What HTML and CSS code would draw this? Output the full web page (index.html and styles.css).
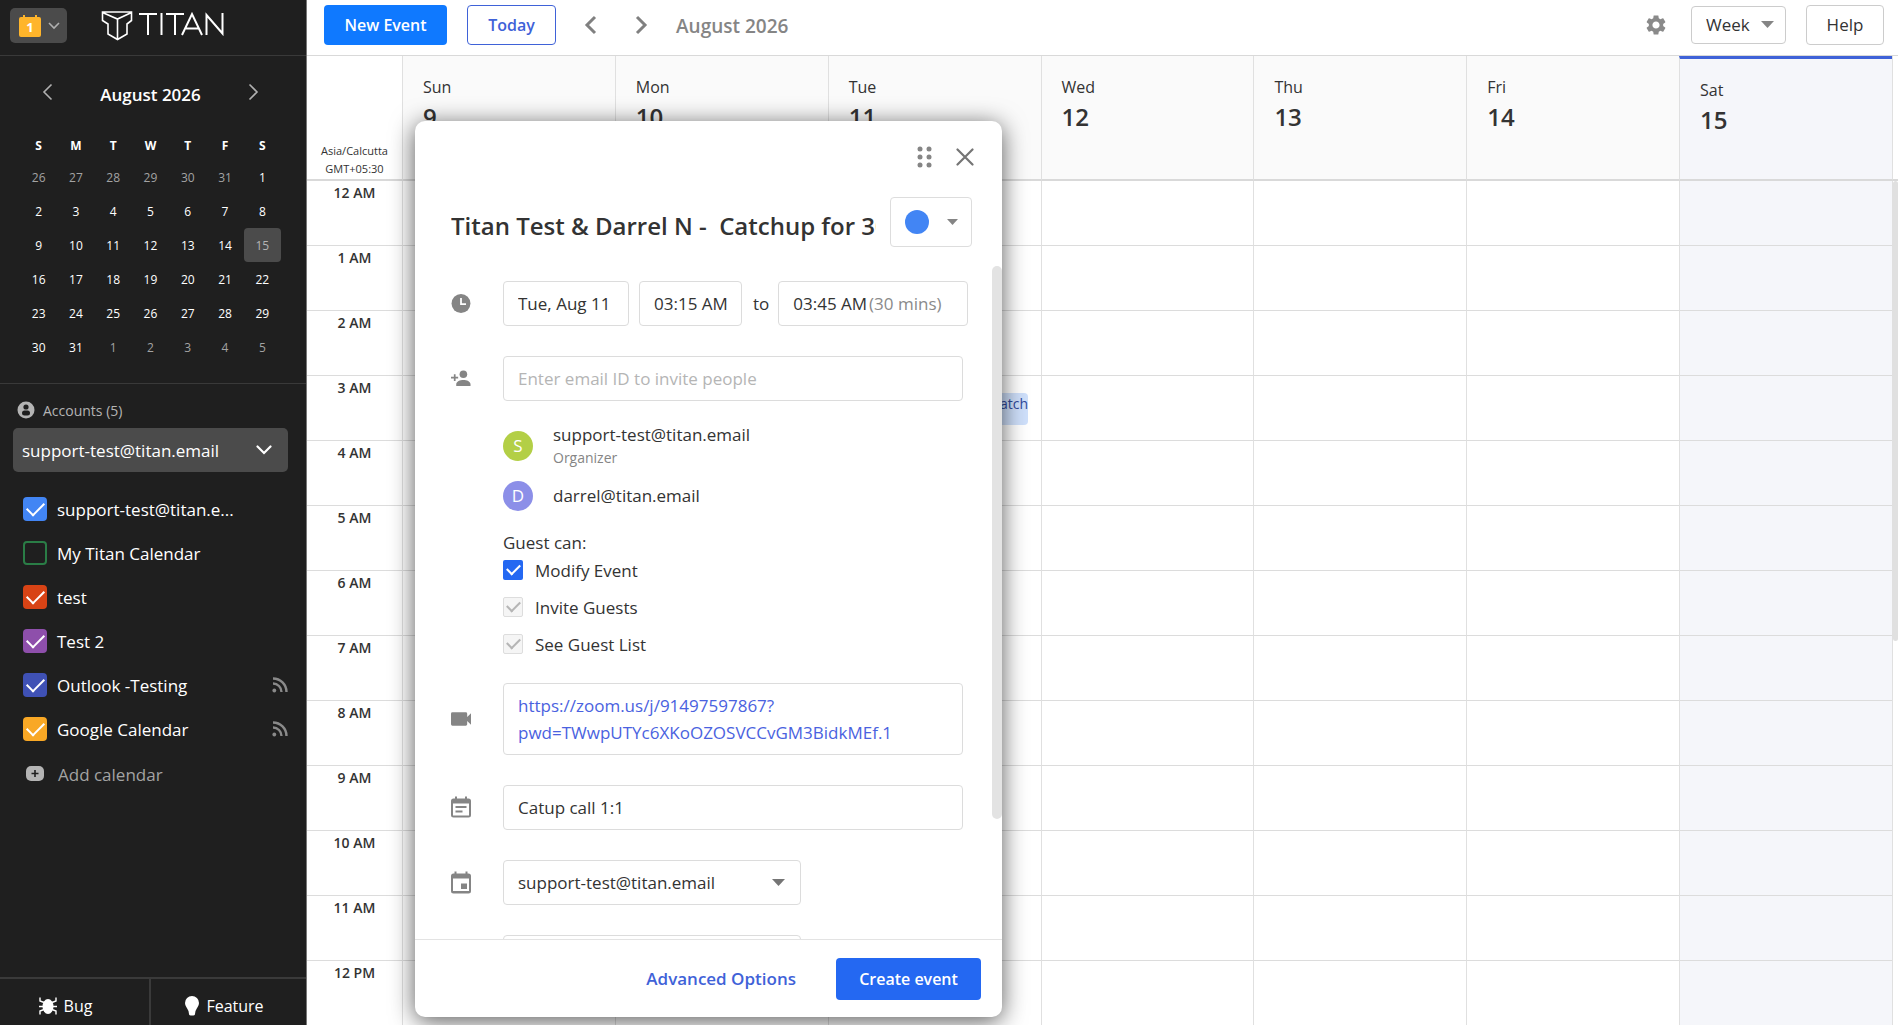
FILE: index.html
```
<!DOCTYPE html>
<html lang="en">
<head>
  <meta charset="UTF-8">
  <meta name="viewport" content="width=device-width, initial-scale=1.0">
  <title>Titan Calendar</title>
  <link rel="stylesheet" href="styles.css">
</head>
<body>
  <!-- Sidebar -->
  <aside class="sidebar">
    <div class="brand">
      <button class="app-switch" aria-label="Switch app">
        <svg width="24" height="24" viewBox="0 0 24 24"><path fill="#ffb52b" d="M5 1h2v2h10V1h2v2h2a2 2 0 0 1 2 2v16a2 2 0 0 1-2 2H3a2 2 0 0 1-2-2V5a2 2 0 0 1 2-2h2z"/><text x="12" y="18" text-anchor="middle" class="app-day">1</text></svg>
        <svg width="12" height="8" viewBox="0 0 12 8"><path class="stroke" d="M1 1l5 5 5-5"/></svg>
      </button>
      <a href="#" class="logo" aria-label="Titan">
        <svg width="124" height="32" viewBox="0 0 124 32" fill="none" stroke="#fff" stroke-width="2">
          <path stroke-width="1.6" d="M1.500 2h29v8.500L26 14v10l-9.500 5.500L7 24V14l-5.500-3.500zM1.500 2.500L16.500 9l14-6.500M16.500 9v20"/>
          <path d="M38 4h18M47 4v21M60.500 3v22M65 4h18M74 4v21M81 25L91 4l10 21M85 18.500h12.500M105.500 25V5l16 18.500V3"/>
        </svg>
      </a>
    </div>

    <div class="mini">
      <div class="mini-nav">
        <button aria-label="Previous month"><svg width="11" height="18" viewBox="0 0 11 18"><path class="stroke" d="M9.500 1.500L2 9l7.500 7.500"/></svg></button>
        <h2>August 2026</h2>
        <button aria-label="Next month"><svg width="11" height="18" viewBox="0 0 11 18"><path class="stroke" d="M1.500 1.500L9 9l-7.500 7.500"/></svg></button>
      </div>
      <table class="mini-table">
        <thead><tr><th>S</th><th>M</th><th>T</th><th>W</th><th>T</th><th>F</th><th>S</th></tr></thead>
        <tbody>
          <tr><td class="out">26</td><td class="out">27</td><td class="out">28</td><td class="out">29</td><td class="out">30</td><td class="out">31</td><td>1</td></tr>
          <tr><td>2</td><td>3</td><td>4</td><td>5</td><td>6</td><td>7</td><td>8</td></tr>
          <tr><td>9</td><td>10</td><td>11</td><td>12</td><td>13</td><td>14</td><td class="selected">15</td></tr>
          <tr><td>16</td><td>17</td><td>18</td><td>19</td><td>20</td><td>21</td><td>22</td></tr>
          <tr><td>23</td><td>24</td><td>25</td><td>26</td><td>27</td><td>28</td><td>29</td></tr>
          <tr><td>30</td><td>31</td><td class="out">1</td><td class="out">2</td><td class="out">3</td><td class="out">4</td><td class="out">5</td></tr>
        </tbody>
      </table>
    </div>

    <div class="accounts">
      <label class="accounts-label" for="account">
        <svg width="18" height="18" viewBox="0 0 18 18"><circle cx="9" cy="9" r="8.500" fill="#b4b4b4"/><circle cx="9" cy="6" r="2.600" fill="#1f1f1f"/><rect x="5" y="9.500" width="8" height="5" rx="2.500" fill="#1f1f1f"/></svg>
        Accounts (5)
      </label>
      <div class="select-wrap">
        <select id="account" class="account-select"><option>support-test@titan.email</option></select>
        <svg class="select-arrow" width="16" height="10" viewBox="0 0 16 10"><path d="M1.500 1.500L8 8l6.500-6.500" fill="none" stroke="#fff" stroke-width="2.200" stroke-linecap="round"/></svg>
      </div>
      <ul class="calendars">
        <li><label><input type="checkbox" class="c-blue" checked><span>support-test@titan.e...</span></label></li>
        <li><label><input type="checkbox" class="c-green"><span>My Titan Calendar</span></label></li>
        <li><label><input type="checkbox" class="c-red" checked><span>test</span></label></li>
        <li><label><input type="checkbox" class="c-purple" checked><span>Test 2</span></label></li>
        <li><label><input type="checkbox" class="c-indigo" checked><span>Outlook -Testing</span></label>
          <svg class="rss" width="16" height="16" viewBox="0 0 16 16"><circle cx="2.300" cy="13.500" r="1.900"/><path d="M1 6.500a8.500 8.500 0 0 1 8.500 8.500M1 1.500A13.500 13.500 0 0 1 14.500 15"/></svg></li>
        <li><label><input type="checkbox" class="c-amber" checked><span>Google Calendar</span></label>
          <svg class="rss" width="16" height="16" viewBox="0 0 16 16"><circle cx="2.300" cy="13.500" r="1.900"/><path d="M1 6.500a8.500 8.500 0 0 1 8.500 8.500M1 1.500A13.500 13.500 0 0 1 14.500 15"/></svg></li>
      </ul>
      <button class="add-calendar">
        <svg width="18" height="16" viewBox="0 0 18 16"><rect width="18" height="15" rx="5" fill="#b4b4b4"/><path d="M9 4v7M5.500 7.500h7" stroke="#1f1f1f" stroke-width="1.600"/></svg>
        Add calendar
      </button>
    </div>

    <div class="feedback">
      <button class="bug">
        <svg width="18" height="18" viewBox="0 0 18 18"><ellipse cx="9" cy="9.500" rx="5.500" ry="7.500" fill="#fff"/><path d="M1 .5v3.500l4 1.500M17 .5v3.500l-4 1.500M0 9.500h18M1 17.500V14l4-1.500M17 17.500V14l-4-1.500" fill="none" stroke="#fff" stroke-width="1.400"/></svg>
        Bug
      </button>
      <button class="feature">
        <svg width="14" height="20" viewBox="0 0 14 20"><path fill="#fff" d="M7 0a7 7 0 0 1 7 7c0 3-2 4.500-3.500 8l-.5 3c0 1-1 1.500-3 1.500S4 19 4 18l-.5-3C2 11.500 0 10 0 7a7 7 0 0 1 7-7z"/></svg>
        Feature
      </button>
    </div>
  </aside>

  <!-- Calendar -->
  <main class="main">
    <header class="toolbar">
      <button class="btn-new">New Event</button>
      <button class="btn-today">Today</button>
      <button class="btn-arrow" aria-label="Previous week"><svg width="14" height="20" viewBox="0 0 14 20"><path d="M11 2l-8 8 8 8"/></svg></button>
      <button class="btn-arrow" aria-label="Next week"><svg width="14" height="20" viewBox="0 0 14 20"><path d="M3 2l8 8-8 8"/></svg></button>
      <h1>August 2026</h1>
      <button class="btn-gear" aria-label="Settings"><svg width="24" height="24" viewBox="0 0 24 24"><path fill="#8a8a8a" d="M19.140 12.940c.040-.3.060-.610.060-.940 0-.320-.020-.640-.070-.940l2.030-1.580c.180-.140.230-.410.120-.610l-1.920-3.320c-.120-.220-.370-.290-.590-.220l-2.390.960c-.5-.380-1.030-.7-1.620-.940l-.360-2.540c-.040-.240-.240-.410-.480-.410h-3.840c-.240 0-.430.170-.470.410l-.360 2.540c-.590.240-1.130.570-1.620.940l-2.390-.960c-.220-.080-.470 0-.590.220L2.740 8.870c-.120.210-.080.470.120.610l2.030 1.580c-.050.300-.090.630-.090.940s.020.640.070.940l-2.030 1.580c-.180.140-.230.410-.120.610l1.920 3.320c.120.220.370.290.590.220l2.390-.960c.5.380 1.030.7 1.620.940l.360 2.540c.050.240.240.410.480.410h3.840c.240 0 .440-.170.470-.410l.360-2.540c.590-.240 1.130-.560 1.620-.940l2.390.960c.220.080.470 0 .590-.220l1.920-3.320c.120-.220.070-.470-.120-.610l-2.010-1.580zM12 15.600c-1.980 0-3.600-1.620-3.600-3.600s1.620-3.600 3.600-3.600 3.600 1.620 3.600 3.600-1.620 3.600-3.600 3.600z"/></svg></button>
      <div class="select-wrap view">
        <select class="view-select" aria-label="View"><option>Week</option></select>
        <svg class="select-arrow" width="13" height="7" viewBox="0 0 13 7"><path fill="#858585" d="M0 0h13L6.500 7z"/></svg>
      </div>
      <button class="btn-help">Help</button>
    </header>

    <table class="week">
      <thead>
        <tr>
          <th class="zone">Asia/Calcutta<br>GMT+05:30</th>
          <th>Sun<b>9</b></th>
          <th>Mon<b>10</b></th>
          <th>Tue<b>11</b></th>
          <th>Wed<b>12</b></th>
          <th>Thu<b>13</b></th>
          <th>Fri<b>14</b></th>
          <th class="today">Sat<b>15</b></th>
          <th class="gutter"></th>
        </tr>
      </thead>
      <tbody id="hours"></tbody>
    </table>
    <div class="page-scroll"></div>
    <div class="event">Titan Test &amp; Darrel N - Catch</div>
  </main>

  <!-- Event dialog -->
  <form class="dialog" role="dialog" aria-label="New event">
    <div class="dialog-top">
      <button type="button" aria-label="Move"><svg width="15" height="22" viewBox="0 0 15 22" fill="#858585"><circle cx="3" cy="3" r="2.500"/><circle cx="12" cy="3" r="2.500"/><circle cx="3" cy="11" r="2.500"/><circle cx="12" cy="11" r="2.500"/><circle cx="3" cy="19" r="2.500"/><circle cx="12" cy="19" r="2.500"/></svg></button>
      <button type="button" aria-label="Close"><svg width="18" height="18" viewBox="0 0 18 18"><path d="M1.500 1.500l15 15M16.500 1.500l-15 15" stroke="#757575" stroke-width="2.200" stroke-linecap="round"/></svg></button>
    </div>
    <div class="dialog-title">
      <input type="text" class="title-input" aria-label="Title" value="Titan Test &amp; Darrel N -  Catchup for 30 mins">
      <button type="button" class="color-btn" aria-label="Color"><span class="dot"></span><svg width="11" height="6" viewBox="0 0 11 6"><path fill="#858585" d="M0 0h11L5.500 6z"/></svg></button>
    </div>

    <div class="dialog-body">
      <div class="field">
        <svg class="icon" width="18" height="18" viewBox="0 0 18 18"><circle cx="9" cy="9" r="8.500" fill="#858585"/><path d="M9 4v5.500h4.500" fill="none" stroke="#fff" stroke-width="1.600"/></svg>
        <div class="times">
          <input type="text" class="box date" aria-label="Date" value="Tue, Aug 11">
          <input type="text" class="box start" aria-label="Start" value="03:15 AM">
          <span>to</span>
          <button type="button" class="box end">03:45 AM<span>(30 mins)</span></button>
        </div>
      </div>

      <div class="field">
        <svg class="icon" width="21" height="18" viewBox="0 0 21 18" fill="#858585"><circle cx="13" cy="4.500" r="4"/><path d="M5.500 17v-2c0-3 4-4.500 7.500-4.500s7.500 1.500 7.500 4.500v2zM0 7.200h3V4.500h1.800v2.700h2.700V9H4.800v2.700H3V9H0z"/></svg>
        <div class="grow">
          <input type="text" class="box wide" aria-label="Guests" placeholder="Enter email ID to invite people">
          <div class="guest"><span class="avatar lime">S</span><div>support-test@titan.email<small>Organizer</small></div></div>
          <div class="guest"><span class="avatar violet">D</span><div>darrel@titan.email</div></div>
          <fieldset class="perms">
            <legend>Guest can:</legend>
            <label><input type="checkbox" checked>Modify Event</label>
            <label><input type="checkbox" checked disabled>Invite Guests</label>
            <label><input type="checkbox" checked disabled>See Guest List</label>
          </fieldset>
        </div>
      </div>

      <div class="field tall">
        <svg class="icon" width="21" height="14" viewBox="0 0 21 14"><path fill="#858585" d="M1.500 0h14q1.500 0 1.500 1.500v3.500l4-4v12l-4-4v3.500q0 1.500-1.500 1.500h-14Q0 14 0 12.500v-11Q0 0 1.500 0z"/></svg>
        <div class="box link-box"><a href="#">https://zoom.us/j/91497597867?<br>pwd=TWwpUTYc6XKoOZOSVCCvGM3BidkMEf.1</a></div>
      </div>

      <div class="field">
        <svg class="icon" width="20" height="22" viewBox="0 0 20 22"><path fill="#858585" fill-rule="evenodd" d="M4 0h2v2h8V0h2v2h1.500A2.500 2.500 0 0 1 20 4.500v14a2.500 2.500 0 0 1-2.500 2.500h-15A2.500 2.500 0 0 1 0 18.500v-14A2.500 2.500 0 0 1 2.500 2H4zM2 7v12h16V7zM4.500 9.500h11v2h-11zM4.500 14h7v2h-7z"/></svg>
        <input type="text" class="box wide" aria-label="Description" value="Catup call 1:1">
      </div>

      <div class="field">
        <svg class="icon" width="20" height="22" viewBox="0 0 20 22"><path fill="#858585" fill-rule="evenodd" d="M3.500 0h2v2h9V0h2v2h1A2.500 2.500 0 0 1 20 4.500v15a2.500 2.500 0 0 1-2.500 2.500h-15A2.500 2.500 0 0 1 0 19.500v-15A2.500 2.500 0 0 1 2.500 2h1zM2 7v12.500h16V7zM10 12h6v5.500h-6z"/></svg>
        <div class="select-wrap cal">
          <select class="box" aria-label="Calendar"><option>support-test@titan.email</option></select>
          <svg class="select-arrow" width="13" height="7" viewBox="0 0 13 7"><path fill="#757575" d="M0 0h13L6.500 7z"/></svg>
        </div>
      </div>

      <div class="field last">
        <div class="select-wrap cal">
          <select class="box" aria-label="Visibility"><option></option></select>
        </div>
      </div>
      <div class="dialog-scroll"></div>
    </div>

    <div class="dialog-foot">
      <button type="button" class="btn-advanced">Advanced Options</button>
      <button type="submit" class="btn-create">Create event</button>
    </div>
  </form>

  <script>
    // Hour rows, midnight to 12 PM
    const hours = document.getElementById("hours");
    for (let h = 0; h <= 12; h++) {
      const label = `${h % 12 || 12} ${h < 12 ? "AM" : "PM"}`;
      hours.innerHTML += `<tr><th>${label}</th>${"<td></td>".repeat(6)}<td class="today"></td><td class="gutter"></td></tr>`;
    }
  </script>
</body>
</html>
```
FILE: styles.css
```
* {
  box-sizing: border-box;
}

body {
  margin: 0;
  height: 100vh;
  display: flex;
  overflow: hidden;
  font-family: "Open Sans", "Noto Sans", sans-serif;
  font-size: 17px;
  color: #333;
  background: #fff;
}

button, input, select {
  font: inherit;
  color: inherit;
}

button {
  border: none;
  padding: 0;
  background: none;
  cursor: pointer;
}

.stroke {
  fill: none;
  stroke: #b0b0b0;
  stroke-width: 1.6;
}

/* Selects with a drawn arrow */
.select-wrap {
  display: grid;
  align-items: center;
}

.select-wrap select {
  grid-area: 1 / 1;
  appearance: none;
  width: 100%;
}

.select-arrow {
  grid-area: 1 / 1;
  justify-self: end;
  margin-right: 16px;
  pointer-events: none;
}

/* Sidebar */
.sidebar {
  flex: 0 0 307px;
  display: flex;
  flex-direction: column;
  background: #1f1f1f;
  color: #fff;
  border-right: 1px solid #777;
}

.brand {
  display: flex;
  align-items: flex-start;
  gap: 34px;
  height: 56px;
  padding: 8px 10px;
  border-bottom: 1px solid #393939;
}

.app-switch {
  display: flex;
  align-items: center;
  justify-content: center;
  gap: 6px;
  width: 57px;
  height: 35px;
  border-radius: 5px;
  background: #4b4b4b;
}

.app-day {
  font: bold 13px "Open Sans", sans-serif;
  fill: #fff;
}

.logo {
  display: flex;
  padding-top: 2px;
}

.mini {
  padding: 20px 25px 19px 20px;
  border-bottom: 1px solid #393939;
}

.mini-nav {
  display: flex;
  justify-content: space-between;
  align-items: center;
  height: 36px;
  padding: 0 22px;
}

.mini-nav h2 {
  margin: 0;
  font-size: 17px;
  font-weight: 600;
}

.mini-table {
  width: 100%;
  margin-top: 18px;
  border-collapse: separate;
  border-spacing: 0;
  table-layout: fixed;
  font-size: 12px;
  text-align: center;
}

.mini-table th {
  height: 30px;
  padding: 0;
  font-weight: 700;
}

.mini-table td {
  height: 34px;
  padding: 0;
}

.mini-table .out {
  color: #a3a3a3;
}

.mini-table .selected {
  background: #4b4b4b;
  color: #b4b4b4;
  border-radius: 4px;
}

.accounts {
  flex: 1;
  padding: 14px 18px 0 13px;
}

.accounts-label {
  display: flex;
  align-items: center;
  gap: 8px;
  height: 24px;
  margin-bottom: 6px;
  padding-left: 4px;
  font-size: 14px;
  color: #b4b4b4;
}

.account-select {
  height: 44px;
  padding: 0 9px;
  border: none;
  border-radius: 5px;
  background: #4b4b4b;
}

.calendars {
  list-style: none;
  margin: 15px 0 0;
  padding: 0;
}

.calendars li {
  display: flex;
  align-items: center;
  justify-content: space-between;
  height: 44px;
}

.calendars label {
  display: flex;
  align-items: center;
  gap: 10px;
  padding-left: 10px;
}

input[type="checkbox"] {
  appearance: none;
  display: grid;
  place-content: center;
  flex: none;
  margin: 0;
}

input[type="checkbox"]:checked::before {
  content: "";
  border: solid #fff;
  border-width: 0 0 2px 2px;
  transform: translateY(-2px) rotate(-45deg);
}

.calendars input {
  width: 24px;
  height: 24px;
  border-radius: 4px;
}

.calendars input:checked::before {
  width: 15px;
  height: 8px;
}

.c-blue { background: #4285f4; }
.c-green { border: 2px solid #2a7d46; }
.c-red { background: #d84315; }
.c-purple { background: #8e4fab; }
.c-indigo { background: #3f51b5; }
.c-amber { background: #f9a825; }

.rss {
  fill: #8a8a8a;
}

.rss path {
  fill: none;
  stroke: #8a8a8a;
  stroke-width: 2.4;
}

.add-calendar {
  display: flex;
  align-items: center;
  gap: 14px;
  height: 46px;
  padding-left: 13px;
  color: #a3a3a3;
}

.feedback {
  display: flex;
  height: 48px;
  border-top: 2px solid #3a3a3a;
}

.feedback button {
  display: flex;
  align-items: center;
  justify-content: center;
  gap: 7px;
  padding-top: 7px;
  font-size: 16px;
}

.feedback .bug {
  flex: 0 0 149px;
  padding-right: 18px;
}

.feedback .feature {
  flex: 1;
  padding-right: 8px;
  border-left: 2px solid #3a3a3a;
}

/* Toolbar */
.main {
  flex: 1;
  min-width: 0;
  position: relative;
}

.toolbar {
  display: flex;
  align-items: center;
  height: 56px;
  padding: 0 14px 6px 17px;
  border-bottom: 1px solid #d9d9d9;
}

.btn-new {
  width: 123px;
  height: 40px;
  border-radius: 4px;
  background: #0f79ff;
  color: #fff;
  font-size: 16px;
  font-weight: 600;
}

.btn-today {
  width: 89px;
  height: 40px;
  margin: 0 28px 0 20px;
  border: 1px solid #3f62d8;
  border-radius: 4px;
  color: #3f62d8;
  font-size: 16px;
  font-weight: 600;
}

.btn-arrow {
  display: flex;
  margin-right: 36px;
}

.btn-arrow path {
  fill: none;
  stroke: #808080;
  stroke-width: 3;
}

.toolbar h1 {
  margin: 0 auto 0 -8px;
  padding-top: 3px;
  font-size: 19px;
  font-weight: 600;
  color: #858585;
}

.btn-gear {
  display: flex;
  margin-right: 23px;
}

.view {
  width: 95px;
  margin-right: 20px;
}

.view-select {
  height: 38px;
  padding: 0 14px;
  border: 1px solid #ccc;
  border-radius: 4px;
  background: #fff;
}

.view .select-arrow {
  margin-right: 12px;
}

.btn-help {
  width: 78px;
  height: 40px;
  border: 1px solid #ccc;
  border-radius: 4px;
}

/* Week grid */
.week {
  width: 100%;
  border-collapse: separate;
  border-spacing: 0;
  table-layout: fixed;
}

.week th, .week td {
  padding: 0;
  font-weight: 400;
  border-left: 1px solid #e0e0e0;
}

.week thead th {
  height: 125px;
  padding: 20px 0 0 20px;
  vertical-align: top;
  text-align: left;
  font-size: 16px;
  background: #fafafa;
  border-bottom: 2px solid #d9d9d9;
}

.week thead b {
  display: block;
  margin-top: 3px;
  font-size: 24px;
  line-height: 32px;
  font-weight: 600;
}

.week thead .zone {
  width: 95px;
  padding: 0 0 1px;
  vertical-align: bottom;
  text-align: center;
  font-size: 11px;
  line-height: 18px;
  background: #fff;
  border-left: none;
}

.week thead .today {
  border-top: 3px solid #3f62d8;
}

.week .today {
  background: #f5f6fa;
}

.week .gutter {
  width: 6px;
  padding: 0;
  background: #fff;
}

.week tbody th {
  vertical-align: top;
  text-align: center;
  font-size: 14px;
  line-height: 24px;
  font-weight: 600;
  border-left: none;
}

.week tbody th, .week tbody td {
  height: 65px;
  border-bottom: 1px solid #dcdcdc;
}

.week tbody .gutter {
  border-bottom: none;
}

.page-scroll {
  position: absolute;
  right: 0;
  top: 181px;
  width: 5px;
  height: 460px;
  border-radius: 3px;
  background: #e0e0e0;
}

.event {
  position: absolute;
  left: 522px;
  top: 393px;
  width: 199px;
  height: 32px;
  border-radius: 4px;
  background: #cfe0fb;
  color: #2f4a9c;
  font-size: 14px;
  line-height: 22px;
  text-align: right;
}

/* Dialog */
.dialog {
  position: absolute;
  left: 415px;
  top: 121px;
  width: 587px;
  height: calc(100vh - 129px);
  display: flex;
  flex-direction: column;
  border-radius: 10px;
  background: #fff;
  box-shadow: 0 4px 24px rgba(0, 0, 0, 0.65);
}

.dialog-top {
  display: flex;
  justify-content: flex-end;
  align-items: center;
  gap: 24px;
  height: 71px;
  padding: 0 28px;
}

.dialog-top button {
  display: flex;
}

.dialog-title {
  display: flex;
  align-items: center;
  gap: 14px;
  height: 60px;
  padding: 0 30px 0 36px;
}

.title-input {
  flex: 1;
  min-width: 0;
  padding: 6px 0 0;
  border: none;
  outline: none;
  font-size: 24px;
  font-weight: 600;
}

.color-btn {
  display: flex;
  align-items: center;
  justify-content: center;
  gap: 18px;
  width: 82px;
  height: 50px;
  border: 1px solid #ddd;
  border-radius: 4px;
}

.dot {
  width: 24px;
  height: 24px;
  border-radius: 50%;
  background: #4285f4;
}

.dialog-body {
  flex: 1;
  min-height: 0;
  position: relative;
  display: flex;
  flex-direction: column;
  gap: 30px;
  padding: 29px 39px 0 36px;
  overflow: hidden;
}

.dialog-scroll {
  position: absolute;
  right: 0;
  top: 14px;
  width: 10px;
  height: 553px;
  border-radius: 5px;
  background: #e3e3e3;
}

.field {
  display: flex;
  flex: none;
  align-items: flex-start;
}

.icon {
  flex: 0 0 20px;
  height: 45px;
  margin-right: 32px;
}

.tall .icon {
  height: 72px;
}

.grow, .wide {
  flex: 1;
  min-width: 0;
  width: 100%;
}

.box {
  height: 45px;
  padding: 0 14px;
  border: 1px solid #dcdcdc;
  border-radius: 4px;
  background: #fff;
  text-align: left;
}

.box::placeholder {
  color: #b5b5b5;
}

.times {
  display: flex;
  align-items: center;
  margin-right: -5px;
  flex: 1;
}

.date {
  width: 126px;
  margin-right: 10px;
}

.start {
  width: 103px;
  margin-right: 11px;
}

.end {
  flex: 1;
  margin-left: 9px;
}

.end span {
  margin-left: 2px;
  color: #8a8a8a;
}

.guest {
  display: flex;
  align-items: center;
  gap: 20px;
  line-height: 24px;
}

.guest:nth-child(2) {
  height: 46px;
  margin: 22px 0 12px;
}

.guest small {
  display: block;
  font-size: 14px;
  line-height: 22px;
  color: #858585;
}

.avatar {
  display: grid;
  place-content: center;
  width: 30px;
  height: 30px;
  border-radius: 50%;
  color: #fff;
}

.lime { background: #b3cf46; }
.violet { background: #8c8fe8; }

.perms {
  margin: 20px 0 0;
  padding: 0;
  border: none;
}

.perms legend {
  padding: 0;
  line-height: 24px;
}

.perms label {
  display: flex;
  align-items: center;
  gap: 12px;
  height: 30px;
  margin-bottom: 7px;
}

.perms label:last-child {
  margin-bottom: -6px;
}

.perms input {
  width: 20px;
  height: 20px;
  border-radius: 2px;
  background: #2468f2;
}

.perms input:checked::before {
  width: 11px;
  height: 6px;
}

.perms input:disabled {
  background: #f5f5f5;
  border: 1px solid #ddd;
}

.perms input:disabled::before {
  border-color: #b5b5b5;
}

.link-box {
  flex: 1;
  height: auto;
  padding: 8px 14px;
}

.link-box a {
  display: block;
  line-height: 27px;
  color: #4a62e0;
  text-decoration: none;
}

.cal {
  width: 298px;
}

.last {
  padding-left: 52px;
}

.dialog-foot {
  display: flex;
  justify-content: flex-end;
  align-items: center;
  gap: 40px;
  height: 78px;
  padding: 0 21px;
  border-top: 1px solid #e3e3e3;
}

.btn-advanced {
  font-size: 17px;
  font-weight: 600;
  color: #3f62d8;
}

.btn-create {
  width: 145px;
  height: 42px;
  border-radius: 4px;
  background: #2468f2;
  color: #fff;
  font-size: 16px;
  font-weight: 600;
}
```
